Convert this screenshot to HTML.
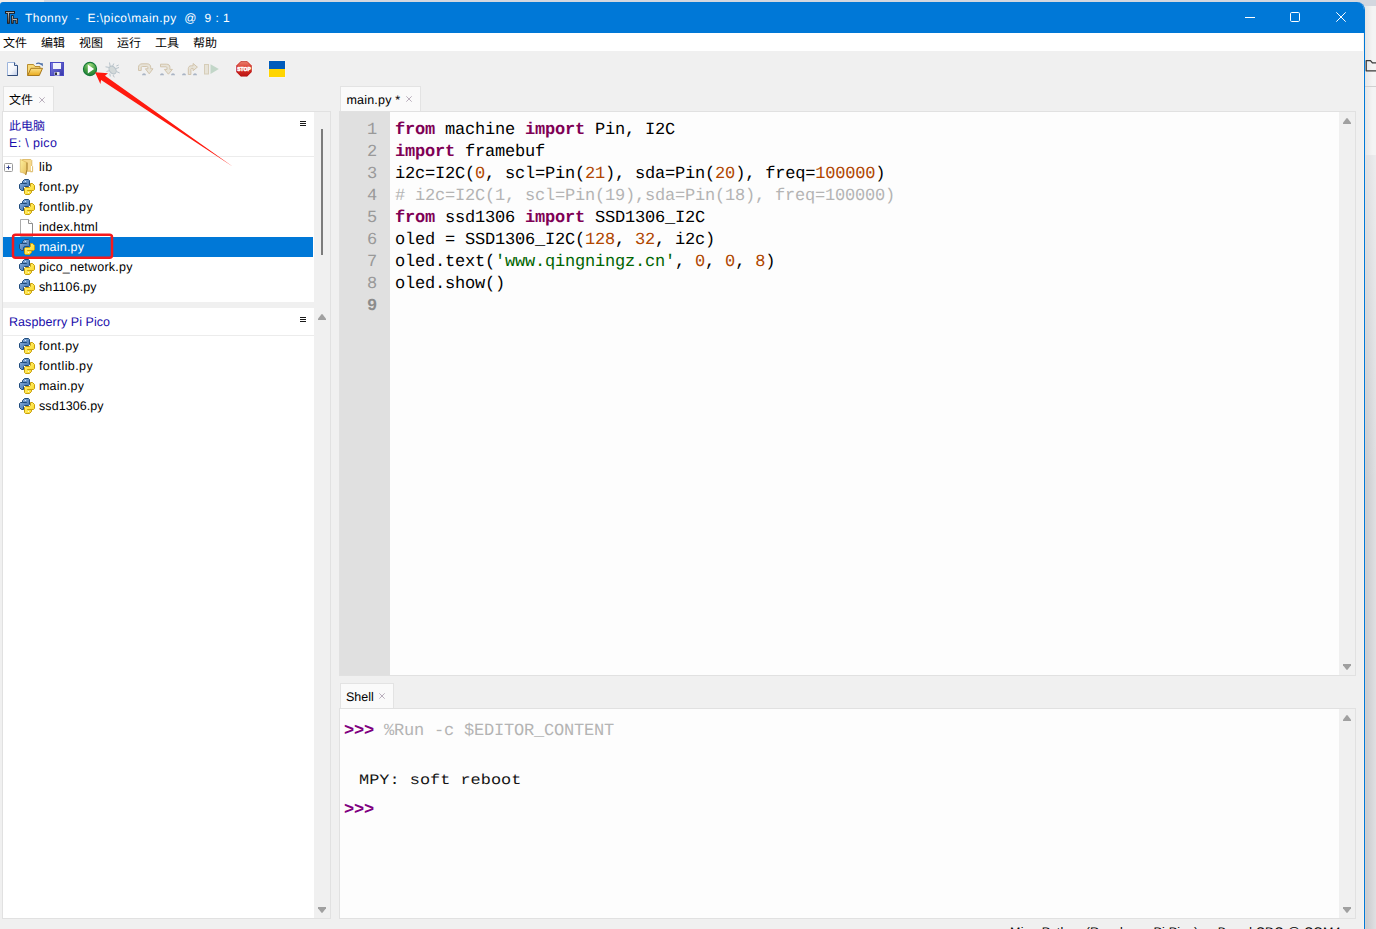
<!DOCTYPE html>
<html lang="zh-CN">
<head>
<meta charset="utf-8">
<title>Thonny - E:\pico\main.py @ 9 : 1</title>
<style>
html,body{margin:0;padding:0}
body{width:1376px;height:929px;overflow:hidden;position:relative;background:#f0f0f0;font-family:"Liberation Sans",sans-serif;font-size:12.5px;color:#000;line-height:1;text-rendering:geometricPrecision;-webkit-font-smoothing:antialiased}
div,span,svg{position:absolute;box-sizing:border-box}
.t{white-space:pre;line-height:14px;height:14px}
.cj{overflow:visible}.cjt{left:0;top:0;color:#000;white-space:nowrap;letter-spacing:0;font-family:"Liberation Sans","Noto Sans CJK SC",sans-serif}
#desk{left:1365px;top:0;width:11px;height:929px;background:linear-gradient(90deg,#e6e6e6,#f4f4f4 70%)}
#desk .top{left:-10px;top:0;width:21px;height:6px;background:#d3d7df}
#desk .ln{left:0;top:86px;width:11px;height:1px;background:#d0d0d0}
#desk .shade{left:0;top:155px;width:11px;height:774px;background:linear-gradient(180deg,rgba(255,255,255,.42) 0,rgba(255,255,255,0) 330px),linear-gradient(90deg,#d9d3d0 0,#cbcccf 1.500px,#dfe0e2 100%)}
#topstrip{left:0;top:0;width:1365px;height:2px;background:#d3d7df}
#topstrip i{position:absolute;left:0;top:0;width:44px;height:2px;background:#f1ede9}
#win{left:0;top:2px;width:1365px;height:927px;background:#f0f0f0;border-right:1px solid #0078d7;border-top-right-radius:8px;border-top-left-radius:3px;overflow:hidden}
#title{left:0;top:0;width:1365px;height:31px;background:#0078d7;color:#fff}
#menu{left:0;top:31px;width:1364px;height:18px;background:#fff}
.tab{background:#fafafa;border:1px solid #e3e3e3;border-bottom:none}
.pane{background:#fff;border:1px solid #e1e1e1}
.sb{background:#f0f0f0}
.row{left:0;height:20px;width:310px}
.row .t{left:36px;top:3px}
.hdr{color:#1a0dab}
.code{font-family:"Liberation Mono",monospace;font-size:17px;white-space:pre;line-height:22px;height:22px;letter-spacing:-.2px}
.kw{color:#7f0055;font-weight:bold}
.num{color:#b04600}
.str{color:#006400}
.cm{color:#b4b4b4}
.ln{color:#999}
.mag{color:#800080;font-weight:bold}
</style>
</head>
<body>
<div id="desk"><div class="top"></div><div class="shade"></div><div class="ln"></div>
<svg style="left:0;top:58px" width="11" height="16" viewBox="0 0 11 16"><path d="M1.2 2.6h4.3l1.9 2.2h4.4v8H1.2z" fill="none" stroke="#3a3a3a" stroke-width="1.3" stroke-linejoin="round"/></svg>
</div>
<div id="topstrip"><i></i></div>
<div id="win">
<div id="title"><svg style="left:4px;top:8px" width="16" height="15" viewBox="4 10 16 15">
<defs><linearGradient id="gth" x1="0" y1="0" x2="0" y2="1"><stop offset="0" stop-color="#bdbdbd"/><stop offset="1" stop-color="#4e443c"/></linearGradient></defs>
<path d="M5.100 11.100h9.800v2.700h-5.100v9.950h-2.700v-9.950h-2z" fill="#1d130d"/>
<path d="M11.200 15.200h2.400v3h4.300v5.550h-2.400v-3.350h-1.900v3.350h-2.400z" fill="#1d130d"/>
<rect x="6" y="11.950" width="8" height=".9" fill="#c9c9c9"/><rect x="7.850" y="12.900" width="1.200" height="10" fill="url(#gth)"/>
<rect x="11.950" y="16.100" width="1" height="6.900" fill="url(#gth)"/><rect x="13" y="18.900" width="4" height=".9" fill="#dcdcdc"/><rect x="16.200" y="19.800" width="1" height="3.200" fill="#8a8078"/>
</svg><span class="t" id="ttl" style="left:25px;top:9px;font-size:12px;letter-spacing:.47px">Thonny  -  E:\pico\main.py  @  9 : 1</span><svg style="left:1245px;top:15px" width="10" height="1" viewBox="0 0 10 1"><rect width="10" height="1" fill="#fff"/></svg>
<svg style="left:1290px;top:10px" width="10" height="10" viewBox="0 0 10 10"><rect x=".5" y=".5" width="9" height="9" rx="1.200" fill="none" stroke="#fff" stroke-width="1"/></svg>
<svg style="left:1336px;top:10px" width="10" height="10" viewBox="0 0 10 10"><path d="M.3.300l9.400 9.400M9.700.300L.3 9.700" stroke="#fff" stroke-width="1" fill="none"/></svg></div>
<div id="menu"><span class="cj " style="left:3px;top:3.5px;width:24px;height:12px"><span class="cjt" style="font-size:12px;line-height:12px">文件</span></span><span class="cj " style="left:41px;top:3.5px;width:24px;height:12px"><span class="cjt" style="font-size:12px;line-height:12px">编辑</span></span><span class="cj " style="left:79px;top:3.5px;width:24px;height:12px"><span class="cjt" style="font-size:12px;line-height:12px">视图</span></span><span class="cj " style="left:117px;top:3.5px;width:24px;height:12px"><span class="cjt" style="font-size:12px;line-height:12px">运行</span></span><span class="cj " style="left:155px;top:3.5px;width:24px;height:12px"><span class="cjt" style="font-size:12px;line-height:12px">工具</span></span><span class="cj " style="left:193px;top:3.5px;width:24px;height:12px"><span class="cjt" style="font-size:12px;line-height:12px">帮助</span></span></div>
<svg id="tb" style="left:0;top:54px" width="300" height="26" viewBox="0 56 300 26">
<defs>
<linearGradient id="gpage" x1="0" y1="0" x2="1" y2="1"><stop offset="0" stop-color="#fff"/><stop offset=".55" stop-color="#f4f6fb"/><stop offset="1" stop-color="#b9c8e6"/></linearGradient>
<linearGradient id="gfold" x1="0" y1="0" x2="0" y2="1"><stop offset="0" stop-color="#fbe28a"/><stop offset="1" stop-color="#e9a91b"/></linearGradient>
<linearGradient id="gsave" x1="0" y1="0" x2="1" y2="1"><stop offset="0" stop-color="#8080e4"/><stop offset="1" stop-color="#3434a8"/></linearGradient>
<radialGradient id="grun" cx=".5" cy=".15" r=".9"><stop offset="0" stop-color="#9ad67a"/><stop offset=".6" stop-color="#3f9a3f"/><stop offset="1" stop-color="#1f7a35"/></radialGradient>
<linearGradient id="gstop" x1="0" y1="0" x2="0" y2="1"><stop offset="0" stop-color="#ec8a78"/><stop offset=".5" stop-color="#d93025"/><stop offset="1" stop-color="#b91414"/></linearGradient>
</defs>
<!-- new -->
<path d="M7.5 62.5h7l3 3v10h-10z" fill="url(#gpage)" stroke="#9db5dc" stroke-width="1"/>
<path d="M14.5 62.5v3h3" fill="#dfe6f4" stroke="#3c5a8c" stroke-width="1"/>
<path d="M7.5 75.5h10v-10" fill="none" stroke="#2f4a78" stroke-width="1"/>
<!-- open -->
<path d="M27.5 75.5v-11h6l1.5 2h5v2" fill="#f7d978" stroke="#b98d2e" stroke-width="1"/>
<path d="M27.7 75.5l3.2-7.2h11.6l-3.2 7.2z" fill="url(#gfold)" stroke="#a8781c" stroke-width="1"/>
<path d="M36.200 63.800q2.600-1.400 4.600.6" fill="none" stroke="#4a6ea8" stroke-width="1.200"/><path d="M39.600 63.200h3.200v3.400z" fill="#4a6ea8"/>
<!-- save -->
<rect x="50.5" y="62.5" width="13" height="13" fill="url(#gsave)" stroke="#4a4ac4" stroke-width="1"/>
<rect x="53" y="63" width="8" height="6" fill="#f2f4fb"/>
<rect x="54.5" y="72" width="5" height="3.5" fill="#e8eaf2"/><rect x="55" y="72.5" width="2" height="2.5" fill="#333"/>
<!-- run -->
<circle cx="90" cy="69" r="6.6" fill="url(#grun)" stroke="#167a3a" stroke-width="1.1"/>
<path d="M87.8 64.6v8.8l6.3-4.4z" fill="#fff"/>
<!-- debug (disabled) -->
<g stroke="#b7c2c9" stroke-width="1" fill="none"><ellipse cx="112.600" cy="70" rx="3.100" ry="4.300" transform="rotate(-38 112.600 70)" fill="#d3d9d9"/><path d="M109.5 62.5l.7 4M113.8 63.5l-1.4 3M105.5 66.8l3.5.6M106.5 71.5l3-.9M109.8 73.5l.5 3M113 75l1.3 2.3M116 68.5l3-1M116.5 71.5l3.2 1.5M116.3 66l2.4-1"/></g>
<!-- step over -->
<g fill="#e7e3d8" stroke="#d2c4ac" stroke-width="1"><path d="M138.5 70.5v-3.2c0-2.200 1.600-3.500 3.600-3.500h5c2.300 0 3.600 1.400 3.600 3.400v1.600h2.300l-3.800 5-3.800-5h2.500v-1.200c0-.7-.4-1.100-1.100-1.100h-4.400c-.8 0-1.200.4-1.200 1.200v2.800z"/></g>
<path d="M142 75.300c0-2.700 4-2.700 4 0z" fill="#a9b4c4"/>
<!-- step into -->
<g fill="#e7e3d8" stroke="#d2c4ac" stroke-width="1"><path d="M160.500 64.200h6.200c2 0 3.200 1.200 3.200 3v2.200h2.500l-4 4.800-4-4.800h2.600v-1.700c0-.6-.3-.9-.9-.9h-5.600z"/></g>
<path d="M160 75.300c0-2.700 4-2.700 4 0zM171 75.300c0-2.700 4-2.700 4 0z" fill="#a9b4c4"/>
<!-- step out -->
<g fill="#e7e3d8" stroke="#d2c4ac" stroke-width="1"><path d="M188.300 74.500v-5.800c0-1.800 1.100-2.900 2.900-2.900h1.900v-2.300l4.300 3.600-4.300 3.600v-2.300h-1.300c-.6 0-.9.300-.9.900v5.200z"/></g>
<path d="M182 75.300c0-2.700 4-2.700 4 0zM193 75.300c0-2.700 4-2.700 4 0z" fill="#a9b4c4"/>
<!-- resume -->
<rect x="204.500" y="64.500" width="4" height="9.500" fill="#e7e3d8" stroke="#d6cdb8" stroke-width="1"/>
<path d="M210.500 64.200v9.800l8.300-4.900z" fill="#c2d6c8"/>
<!-- stop -->
<path d="M240.700 60.700h6.600l4.700 4.700v6.600l-4.700 4.700h-6.600l-4.700-4.700v-6.600z" fill="url(#gstop)" stroke="#fff" stroke-width="1" stroke-opacity=".85"/>
<path d="M240.900 61.600h6.200l4.300 4.300v6.200l-4.300 4.300h-6.200l-4.300-4.300v-6.200z" fill="none" stroke="#a81010" stroke-width=".5"/>
<text x="244" y="71.200" text-anchor="middle" font-family="Liberation Sans, sans-serif" font-weight="bold" font-size="5.800" fill="#fff" stroke="#fff" stroke-width=".55" textLength="13.500" lengthAdjust="spacingAndGlyphs">STOP</text>
<!-- flag -->
<rect x="268.500" y="60.500" width="17" height="17" fill="#fbf6ee"/>
<rect x="269" y="61" width="16" height="8" fill="#005bbb"/><rect x="269" y="69" width="16" height="8" fill="#ffd500"/>
</svg>
<svg width="0" height="0" style="left:0;top:0"><defs>
<symbol id="py" viewBox="0 0 16 16">
<linearGradient id="gpb" x1="0" y1="0" x2="1" y2="1"><stop offset="0" stop-color="#9dbbe2"/><stop offset=".5" stop-color="#6390c6"/><stop offset="1" stop-color="#3f6da6"/></linearGradient>
<linearGradient id="gpy" x1="0" y1="0" x2="1" y2="1"><stop offset="0" stop-color="#f2cc1e"/><stop offset=".5" stop-color="#ffe64e"/><stop offset="1" stop-color="#fff08a"/></linearGradient>
<g id="pyb"><path d="M5.500.5h4l1 1v5l-1 1h-4l-1 1v3h-2l-2-2v-4l1-1h2v-2z" fill="url(#gpb)" stroke="#1f4b7c" stroke-width="1" stroke-linejoin="round"/>
<path d="M3.500 4.500h4.300" stroke="#1f4b7c" stroke-width="1"/><rect x="5.900" y="2" width="1.200" height="1" fill="#d6e4f5"/></g>
<g transform="rotate(180 8 8)"><path d="M5.500.5h4l1 1v5l-1 1h-4l-1 1v3h-2l-2-2v-4l1-1h2v-2z" fill="url(#gpy)" stroke="#c79f0c" stroke-width="1" stroke-linejoin="round"/>
<path d="M3.500 4.500h4.300" stroke="#c79f0c" stroke-width="1"/><rect x="5.900" y="2" width="1.200" height="1" fill="#fff9d8"/></g>
</symbol>
<symbol id="fold" viewBox="0 0 16 18">
<linearGradient id="gfl" x1="0" y1="0" x2="1" y2="1"><stop offset="0" stop-color="#fdf19c"/><stop offset="1" stop-color="#e6bd5e"/></linearGradient>
<path d="M3.500 1.500h8.300l1 1v10.700h-9.300z" fill="#f7d98c" stroke="#dcb963" stroke-width=".9"/>
<rect x="12" y="8" width="1.400" height="5.200" fill="#fff"/><path d="M13.600 8.200v5.600h-2.200" fill="none" stroke="#d9b55e" stroke-width=".9"/>
<path d="M1.300 1.300L8 4.600v7L6.800 17l-1.400-1.600-2.400-.9-1.700-.3z" fill="url(#gfl)" stroke="#d6ae50" stroke-width=".6"/>
<path d="M8 4.600v7L6.800 16.800" fill="none" stroke="#a57e2c" stroke-width="1"/>
</symbol>
<symbol id="doc" viewBox="0 0 16 18">
<path d="M.5.500h8l4 4v13h-12z" fill="#fff" stroke="#ababab" stroke-width="1"/><path d="M12.500 4.500v13" stroke="#8c8c8c" stroke-width="1"/><path d="M8.500.500v4h4" fill="#fdfdfd" stroke="#8f8f8f" stroke-width="1"/>
</symbol>
</defs></svg>
<div class="tab" style="left:3px;top:84px;width:51px;height:26px"><span class="cj " style="left:5px;top:6.5px;width:24px;height:12px"><span class="cjt" style="font-size:12px;line-height:12px">文件</span></span><svg style="left:35px;top:9.500px" width="6" height="6" viewBox="0 0 6 6"><path d="M.3.300l5.400 5.400M5.700.300L.3 5.700" stroke="#a89cac" stroke-width=".8"/></svg></div>
<div class="pane" style="left:2px;top:109px;width:329px;height:808px;background:#f0f0f0"></div>
<div id="local" style="left:3px;top:110px;width:311px;height:190px;background:#fff;overflow:hidden"><span class="cj " style="left:6px;top:7.5px;width:36px;height:12px"><span class="cjt" style="font-size:12px;line-height:12px;color:#1a0dab">此电脑</span></span><span class="t hdr" style="left:6px;top:24px;letter-spacing:.34px" id="epico">E: \ pico</span><svg style="left:297px;top:9px" width="6" height="5" viewBox="0 0 6 5"><path d="M0 .5h6M0 2.500h6M0 4.500h6" stroke="#1a1a1a" stroke-width="1"/></svg><div style="left:0;top:44px;width:311px;height:1px;background:#ececec"></div><div class="row" style="top:45px;"><svg style="left:1px;top:5.500px" width="9" height="9" viewBox="0 0 9 9"><rect x=".5" y=".5" width="8" height="8" rx="1" fill="#fdfdfd" stroke="#9a9a9a"/><path d="M2.500 4.500h4M4.500 2.500v4" stroke="#2b3a8c" stroke-width="1"/></svg><svg style="left:16px;top:1px" width="16" height="18"><use href="#fold"/></svg><span class="t" style="color:#000;letter-spacing:0.3px">lib</span></div>
<div class="row" style="top:65px;"><svg style="left:16px;top:2px" width="16" height="16"><use href="#py"/></svg><span class="t" style="color:#000;letter-spacing:0.38px">font.py</span></div>
<div class="row" style="top:85px;"><svg style="left:16px;top:2px" width="16" height="16"><use href="#py"/></svg><span class="t" style="color:#000;letter-spacing:0.4px">fontlib.py</span></div>
<div class="row" style="top:105px;"><svg style="left:17px;top:2px" width="16" height="18"><use href="#doc"/></svg><span class="t" style="color:#000;letter-spacing:0.19px">index.html</span></div>
<div class="row" style="top:125px;background:#0078d7;"><svg style="left:16px;top:2px" width="16" height="16"><use href="#py"/></svg><span class="t" style="color:#fff;letter-spacing:0.2px">main.py</span></div>
<div class="row" style="top:145px;"><svg style="left:16px;top:2px" width="16" height="16"><use href="#py"/></svg><span class="t" style="color:#000;letter-spacing:0.22px">pico_network.py</span></div>
<div class="row" style="top:165px;"><svg style="left:16px;top:2px" width="16" height="16"><use href="#py"/></svg><span class="t" style="color:#000;letter-spacing:0.1px">sh1106.py</span></div>
</div>
<div style="left:314px;top:110px;width:16px;height:190px;background:#f0f0f0"></div><div style="left:321px;top:127px;width:2px;height:126px;background:#7c7c7c"></div>
<div id="dev" style="left:3px;top:306px;width:311px;height:610px;background:#fff;overflow:hidden"><span class="t hdr" style="left:6px;top:7px;letter-spacing:.06px" id="rpp">Raspberry Pi Pico</span><svg style="left:297px;top:9px" width="6" height="5" viewBox="0 0 6 5"><path d="M0 .5h6M0 2.500h6M0 4.500h6" stroke="#1a1a1a" stroke-width="1"/></svg><div style="left:0;top:27px;width:311px;height:1px;background:#ececec"></div><div class="row" style="top:28px;"><svg style="left:16px;top:2px" width="16" height="16"><use href="#py"/></svg><span class="t" style="color:#000;letter-spacing:0.38px">font.py</span></div>
<div class="row" style="top:48px;"><svg style="left:16px;top:2px" width="16" height="16"><use href="#py"/></svg><span class="t" style="color:#000;letter-spacing:0.4px">fontlib.py</span></div>
<div class="row" style="top:68px;"><svg style="left:16px;top:2px" width="16" height="16"><use href="#py"/></svg><span class="t" style="color:#000;letter-spacing:0.2px">main.py</span></div>
<div class="row" style="top:88px;"><svg style="left:16px;top:2px" width="16" height="16"><use href="#py"/></svg><span class="t" style="color:#000;letter-spacing:0.07px">ssd1306.py</span></div>
</div>
<div style="left:314px;top:306px;width:16px;height:610px;background:#f0f0f0"></div><svg style="left:318px;top:312px" width="8" height="6" viewBox="0 0 8 6"><path d="M0 6h8V4.800L4.700.500q-.700-.800-1.400 0L0 4.800z" fill="#a0a0a0"/></svg><svg style="left:318px;top:905px" width="8" height="6" viewBox="0 0 8 6"><path d="M0 0h8v1.200L4.700 5.500q-.700.800-1.400 0L0 1.200z" fill="#a0a0a0"/></svg>
<div class="tab" style="left:340px;top:84px;width:81px;height:26px"><span class="t" id="tabmain" style="left:5.500px;top:6px;letter-spacing:.19px">main.py *</span><svg style="left:65px;top:8.500px" width="6" height="6" viewBox="0 0 6 6"><path d="M.3.300l5.400 5.400M5.700.300L.3 5.700" stroke="#a89cac" stroke-width=".8"/></svg></div>
<div class="pane" style="left:339px;top:109px;width:1017px;height:565px;background:#fdfdfd"></div>
<div style="left:340px;top:110px;width:50px;height:563px;background:#e0e0e0"></div>
<div class="sb" style="left:1339px;top:110px;width:16px;height:563px"></div><svg style="left:1343px;top:116px" width="8" height="6" viewBox="0 0 8 6"><path d="M0 6h8V4.800L4.700.500q-.700-.800-1.400 0L0 4.800z" fill="#a0a0a0"/></svg><svg style="left:1343px;top:662px" width="8" height="6" viewBox="0 0 8 6"><path d="M0 0h8v1.200L4.700 5.500q-.700.800-1.400 0L0 1.200z" fill="#a0a0a0"/></svg>
<span class="code ln" style="left:367px;top:117.5px">1</span><span class="code" style="left:395px;top:117.5px"><span style="position:static" class="kw">from</span> machine <span style="position:static" class="kw">import</span> Pin, I2C</span>
<span class="code ln" style="left:367px;top:139.5px">2</span><span class="code" style="left:395px;top:139.5px"><span style="position:static" class="kw">import</span> framebuf</span>
<span class="code ln" style="left:367px;top:161.5px">3</span><span class="code" style="left:395px;top:161.5px">i2c=I2C(<span style="position:static" class="num">0</span>, scl=Pin(<span style="position:static" class="num">21</span>), sda=Pin(<span style="position:static" class="num">20</span>), freq=<span style="position:static" class="num">100000</span>)</span>
<span class="code ln" style="left:367px;top:183.5px">4</span><span class="code" style="left:395px;top:183.5px"><span style="position:static" class="cm"># i2c=I2C(1, scl=Pin(19),sda=Pin(18), freq=100000)</span></span>
<span class="code ln" style="left:367px;top:205.5px">5</span><span class="code" style="left:395px;top:205.5px"><span style="position:static" class="kw">from</span> ssd1306 <span style="position:static" class="kw">import</span> SSD1306_I2C</span>
<span class="code ln" style="left:367px;top:227.5px">6</span><span class="code" style="left:395px;top:227.5px">oled = SSD1306_I2C(<span style="position:static" class="num">128</span>, <span style="position:static" class="num">32</span>, i2c)</span>
<span class="code ln" style="left:367px;top:249.5px">7</span><span class="code" style="left:395px;top:249.5px">oled.text(<span style="position:static" class="str">'www.qingningz.cn'</span>, <span style="position:static" class="num">0</span>, <span style="position:static" class="num">0</span>, <span style="position:static" class="num">8</span>)</span>
<span class="code ln" style="left:367px;top:271.5px">8</span><span class="code" style="left:395px;top:271.5px">oled.show()</span>
<span class="code ln" style="left:367px;top:293.5px;font-weight:bold;color:#8c8c8c">9</span><span class="code" style="left:395px;top:293.5px"></span>
<div class="tab" style="left:340px;top:681px;width:54px;height:26px"><span class="t" id="tabshell" style="left:5px;top:6px">Shell</span><svg style="left:38px;top:9px" width="6" height="6" viewBox="0 0 6 6"><path d="M.3.300l5.400 5.400M5.700.300L.3 5.700" stroke="#a89cac" stroke-width=".8"/></svg></div>
<div class="pane" style="left:339px;top:706px;width:1017px;height:211px;background:#fdfdfd"></div>
<div class="sb" style="left:1339px;top:707px;width:16px;height:209px"></div><svg style="left:1343px;top:713px" width="8" height="6" viewBox="0 0 8 6"><path d="M0 6h8V4.800L4.700.500q-.700-.800-1.400 0L0 4.800z" fill="#a0a0a0"/></svg><svg style="left:1343px;top:905px" width="8" height="6" viewBox="0 0 8 6"><path d="M0 0h8v1.200L4.700 5.500q-.700.800-1.400 0L0 1.200z" fill="#a0a0a0"/></svg>
<span class="code" style="left:344px;top:719px"><span style="position:static" class="mag">&gt;&gt;&gt;</span> <span style="position:static" class="cm">%Run -c $EDITOR_CONTENT</span></span>
<span class="code" id="mpy" style="left:359px;top:768px;color:#141414;font-size:14.400px;letter-spacing:0;transform-origin:0 50%;transform:scaleX(1.175)">MPY: soft reboot</span>
<span class="code" style="left:344px;top:798px"><span style="position:static" class="mag">&gt;&gt;&gt;</span> </span>
<span class="t" id="status" style="left:1010px;top:923px;letter-spacing:.225px">MicroPython (Raspberry Pi Pico)  •  Board CDC @ COM4</span>
<div style="left:1363px;top:31px;width:1px;height:900px;background:#f8f4f0"></div>
</div>
<svg id="anno" style="left:0;top:0" width="400" height="300" viewBox="0 0 400 300">
<path d="M95 72.300L108 73.200L105 75.800L233 166.800L101.100 79.900L100.400 84z" fill="#ff1a0f"/>
<rect x="13" y="234.800" width="99" height="23" rx="2.500" fill="none" stroke="#f5191c" stroke-width="2.500"/>
</svg>
</body>
</html>
